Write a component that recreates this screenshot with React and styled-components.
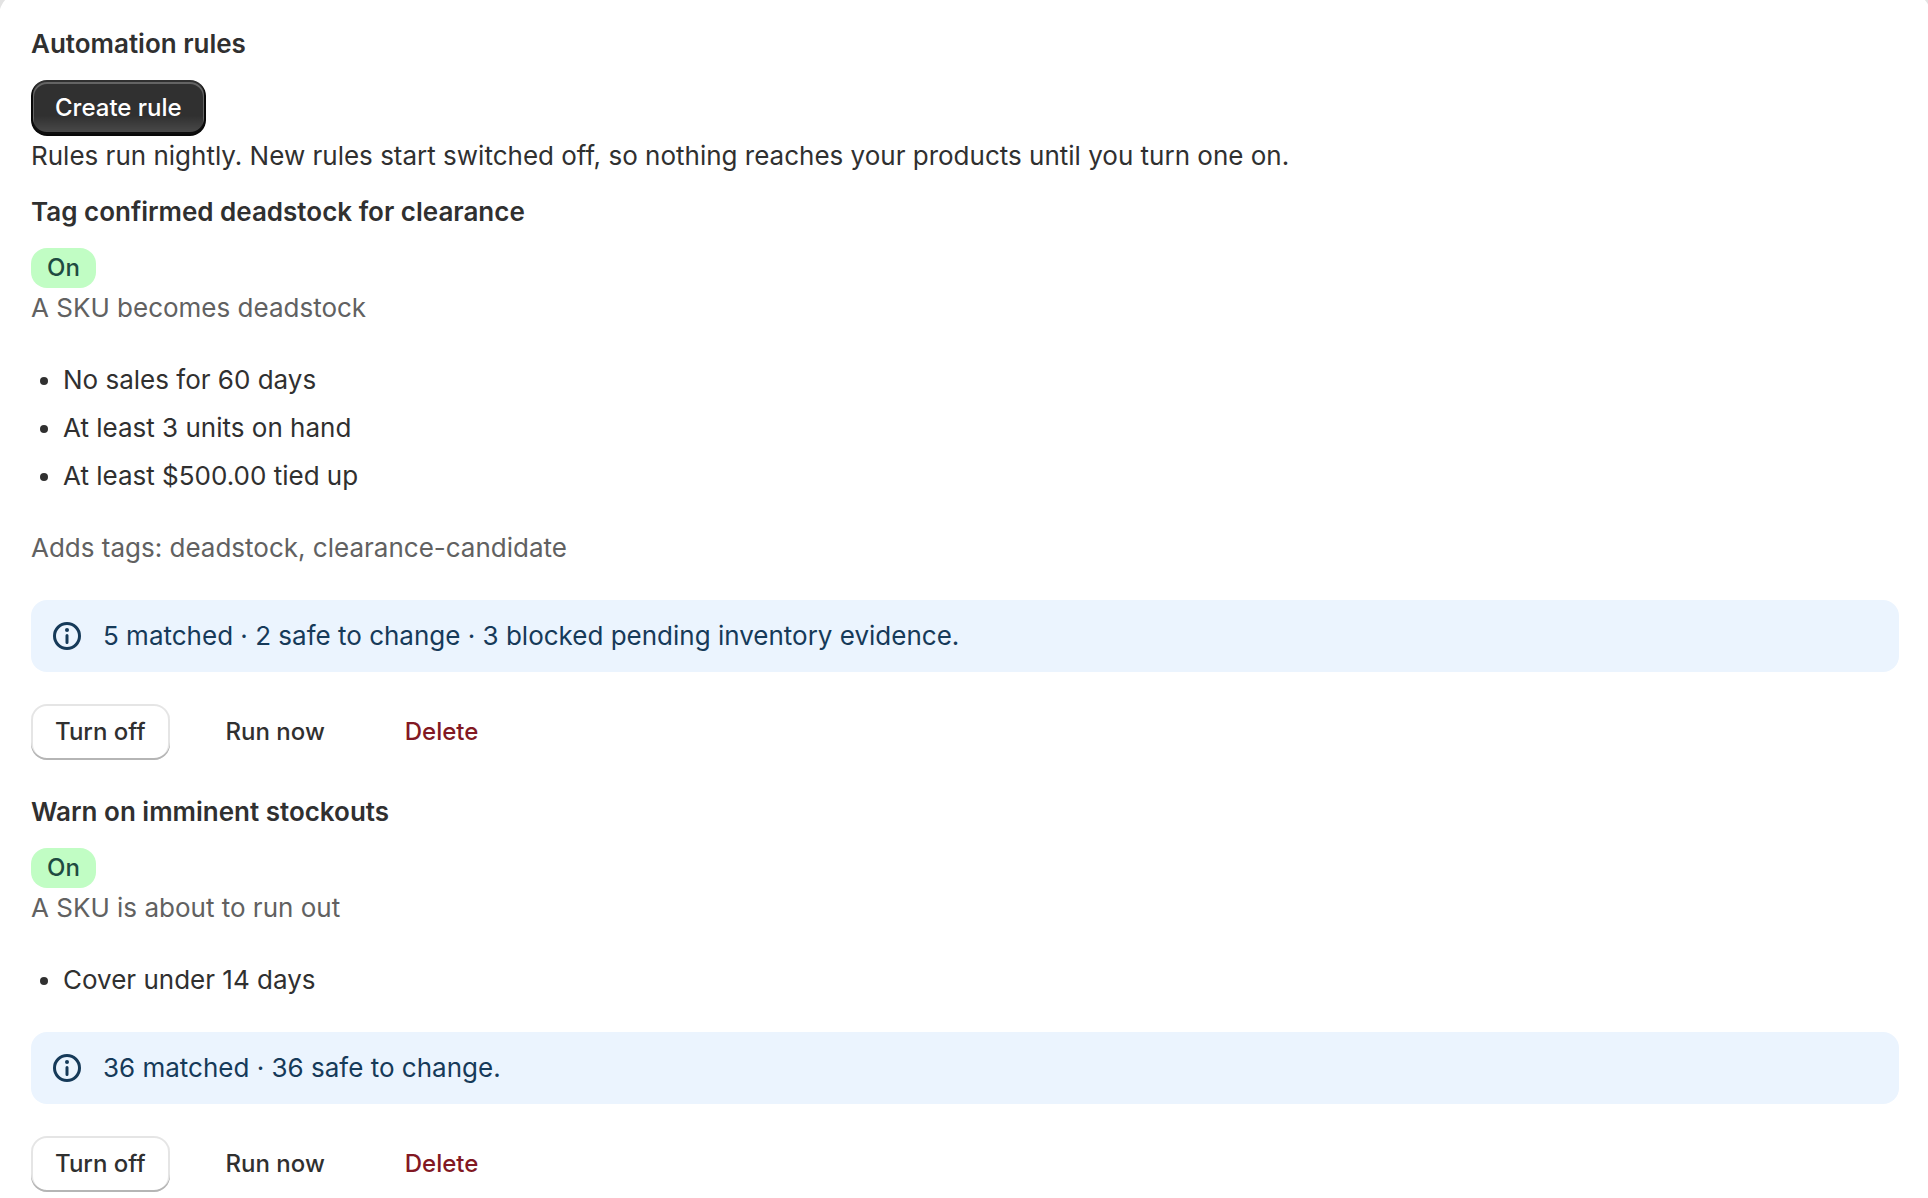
import styled, {createGlobalStyle} from 'styled-components'

const rules = [
  {
    id: 'deadstock',
    title: 'Tag confirmed deadstock for clearance',
    trigger: 'A SKU becomes deadstock',
    conditions: ['No sales for 60 days', 'At least 3 units on hand', 'At least $500.00 tied up'],
    action: 'Adds tags: deadstock, clearance-candidate',
    result: '5 matched · 2 safe to change · 3 blocked pending inventory evidence.',
  },
  {
    id: 'stockouts',
    title: 'Warn on imminent stockouts',
    trigger: 'A SKU is about to run out',
    conditions: ['Cover under 14 days'],
    result: '36 matched · 36 safe to change.',
  },
]

const GlobalStyle = createGlobalStyle`
  * {
    box-sizing: border-box;
  }
  body {
    margin: 0;
    background-color: #f1f1f1;
    color: #303030;
    font-family: Inter, 'Liberation Sans', sans-serif;
    font-size: 26px;
    font-weight: 400;
    line-height: 40px;
  }
`

const Page = styled.main`
  overflow: hidden;
`

const Card = styled.section`
  margin: -8px -3px -8px -1px;
  padding: 32px;
  border-radius: 24px;
  background-color: #fff;
  box-shadow: 0 0 0 4px #e3e3e3;
`

const Heading = styled.h2`
  margin: 0 0 16px;
  font-size: 26px;
  font-weight: 600;
  line-height: 40px;
`

const Text = styled.p`
  margin: 0;
  color: ${(props) => props.$subdued ? '#616161' : '#303030'};
`

const Button = styled.button`
  display: block;
  height: 56px;
  padding: 0 24px;
  border: 0;
  border-radius: 16px;
  background: transparent;
  color: ${(props) => props.$critical ? '#821823' : '#303030'};
  font-family: inherit;
  font-size: 24px;
  font-weight: 500;
  line-height: 32px;
  cursor: pointer;
`

const PrimaryButton = styled(Button)`
  background: linear-gradient(180deg, rgba(48, 48, 48, 0) 64%, rgba(255, 255, 255, 0.15) 100%), #303030;
  color: #fff;
  box-shadow:
    inset 0 -2px 0 2px rgba(0, 0, 0, 0.8),
    inset 0 0 0 2px #303030,
    inset 0 1px 0 3px rgba(255, 255, 255, 0.25);
`

const SecondaryButton = styled(Button)`
  background: #fff;
  box-shadow:
    inset 0 -2px 0 0 #b5b5b5,
    inset 0 0 0 2px rgba(0, 0, 0, 0.1);
`

const RuleBlock = styled.article`
  display: flex;
  flex-direction: column;
  gap: 32px;
  margin-top: ${(props) => props.$first ? '16px' : '32px'};
`

const Badge = styled.span`
  display: block;
  width: fit-content;
  padding: 4px 16px;
  border-radius: 16px;
  background-color: #c1fdc4;
  color: #1f4b41;
  font-size: 24px;
  font-weight: 500;
  line-height: 32px;
`

const Conditions = styled.ul`
  display: flex;
  flex-direction: column;
  gap: 8px;
  margin: 0;
  padding-left: 32px;
`

const Banner = styled.div`
  display: flex;
  gap: 16px;
  padding: 16px;
  border-radius: 16px;
  background-color: #ebf4fe;
  color: #163a59;
  svg {
    flex: none;
    width: 40px;
    height: 40px;
  }
`

const Actions = styled.div`
  display: flex;
  gap: 32px;
`

const InfoIcon = () => (
  <svg viewBox='0 0 20 20' fill='currentColor' aria-hidden='true'>
    <path d='M10 14a.75.75 0 0 1-.75-.75v-3.5a.75.75 0 0 1 1.5 0v3.5a.75.75 0 0 1-.75.75Z' />
    <path d='M9 7a1 1 0 1 1 2 0 1 1 0 0 1-2 0Z' />
    <path fillRule='evenodd' d='M17 10a7 7 0 1 1-14 0 7 7 0 0 1 14 0Zm-1.500 0a5.500 5.500 0 1 1-11 0 5.500 5.500 0 0 1 11 0Z' />
  </svg>
)

const Rule = ({rule, first}) => (
  <RuleBlock $first={first}>
    <div>
      <Heading as='h3'>{rule.title}</Heading>
      <Badge>On</Badge>
      <Text $subdued>{rule.trigger}</Text>
    </div>
    <Conditions>
      {rule.conditions.map((condition) => (
        <li key={condition}>{condition}</li>
      ))}
    </Conditions>
    {rule.action && <Text $subdued>{rule.action}</Text>}
    <Banner role='status'>
      <InfoIcon />
      <span>{rule.result}</span>
    </Banner>
    <Actions>
      <SecondaryButton type='button'>Turn off</SecondaryButton>
      <Button type='button'>Run now</Button>
      <Button type='button' $critical>Delete</Button>
    </Actions>
  </RuleBlock>
)

const App = () => {
  return (
    <Page>
      <GlobalStyle />
      <Card>
        <Heading>Automation rules</Heading>
        <PrimaryButton type='button'>Create rule</PrimaryButton>
        <Text>Rules run nightly. New rules start switched off, so nothing reaches your products until you turn one on.</Text>
        {rules.map((rule, index) => (
          <Rule key={rule.id} rule={rule} first={index === 0} />
        ))}
      </Card>
    </Page>
  )
}

export default App
